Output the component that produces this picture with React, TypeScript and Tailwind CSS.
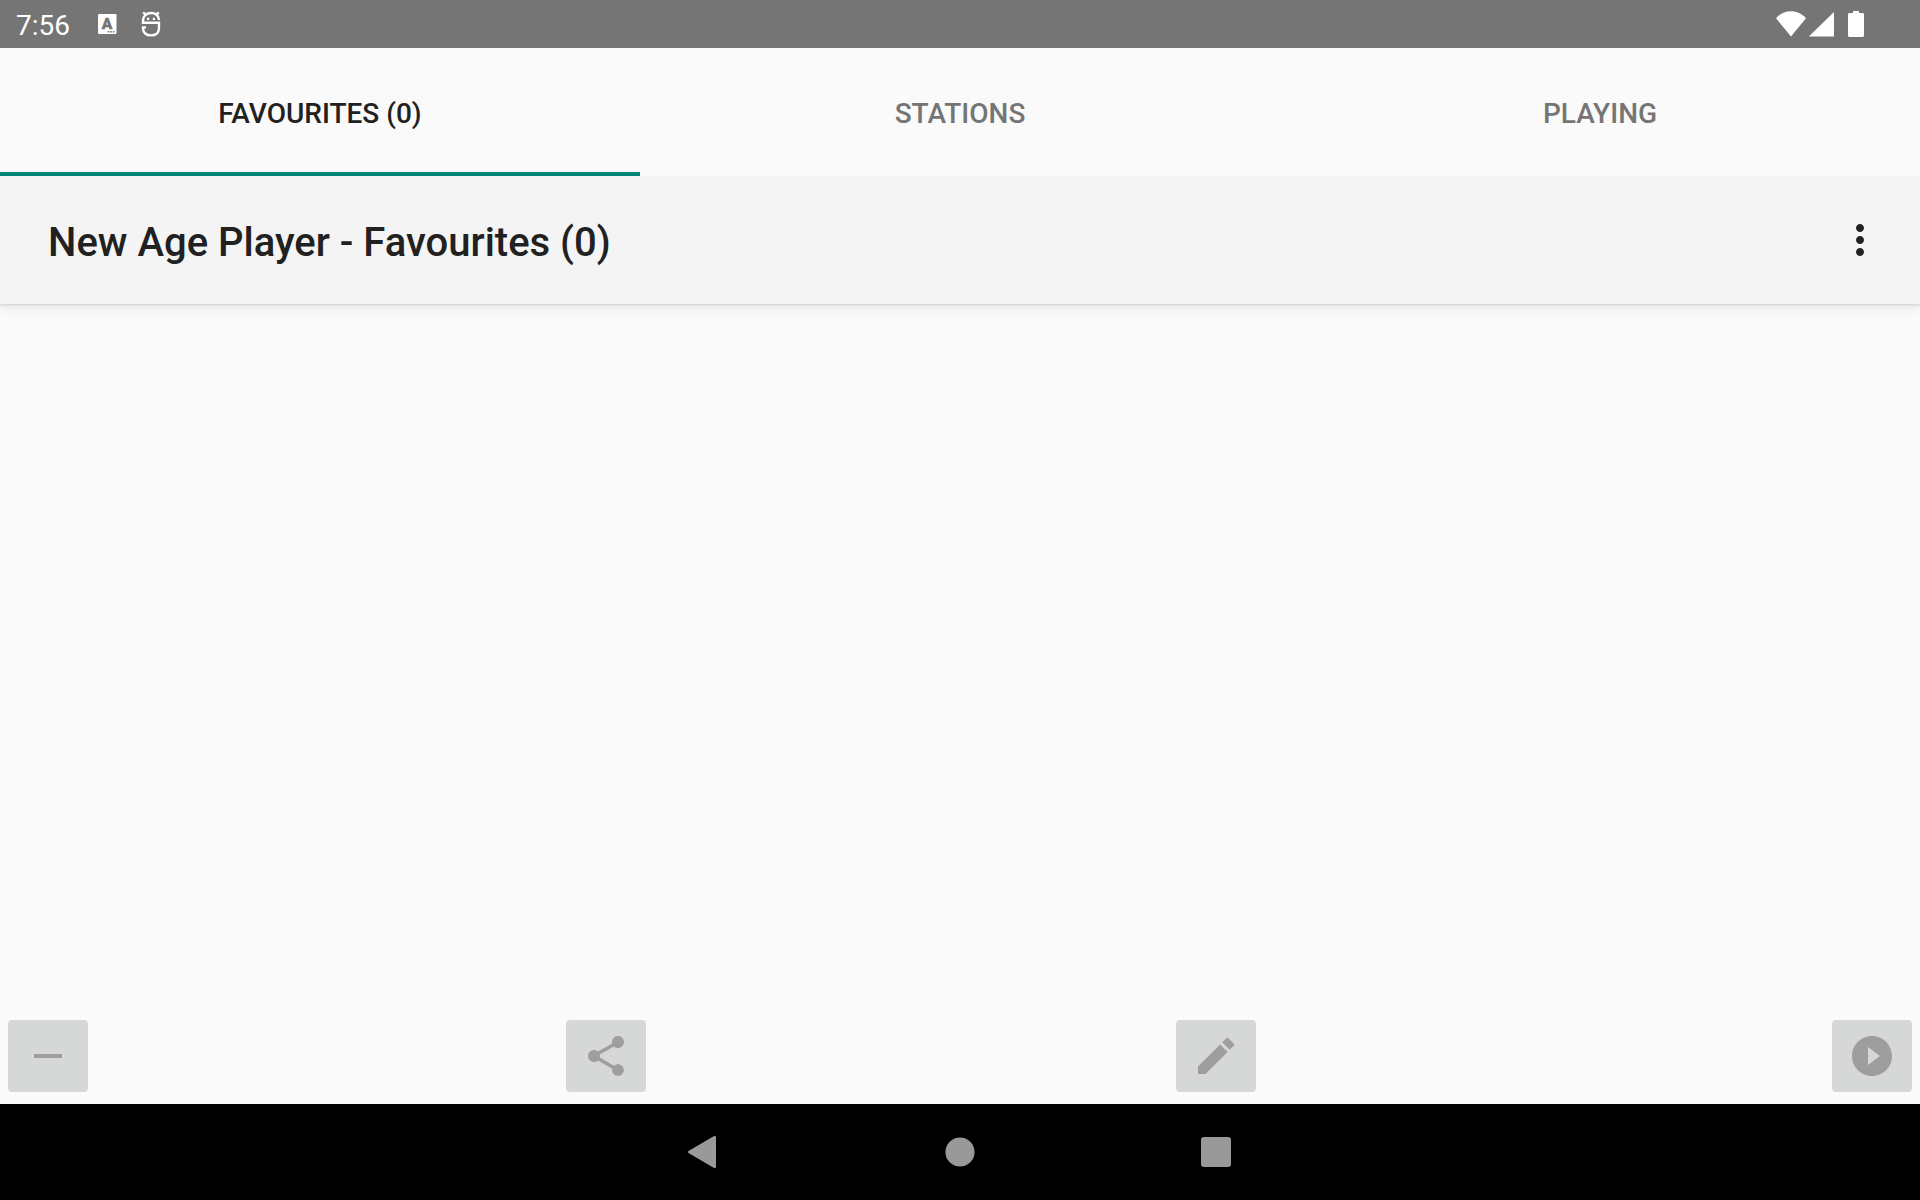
import React, { useState } from 'react'

interface TabItem {
  id: string
  label: string
}

const TABS: TabItem[] = [
  { id: 'favourites', label: 'FAVOURITES (0)' },
  { id: 'stations', label: 'STATIONS' },
  { id: 'playing', label: 'PLAYING' },
]

const StatusBar: React.FC = () => (
  <div className="flex h-12 items-center justify-between bg-[#757575] pl-4 pr-14 text-white">
    <div className="flex items-center">
      <span className="pt-1 text-[28px] leading-8">7:56</span>

      {/* Keyboard notification */}
      <svg className="ml-[26px] h-6 w-6" viewBox="0 0 24 24" aria-hidden="true">
        <rect x="2" y="2" width="18.5" height="20" rx="1.2" fill="#fff" />
        <text
          x="11"
          y="16.800"
          textAnchor="middle"
          fontFamily="Roboto, sans-serif"
          fontWeight="900"
          fontSize="15.500"
          fill="#757575"
          stroke="#757575"
          strokeWidth="0.4"
        >
          A
        </text>
        <path d="M11.6 19h1.6v1.5h-1.6zM14.2 19h1.6v1.5h-1.6zM16.8 19h1.6v1.5h-1.6z" fill="#757575" />
      </svg>

      {/* Debug notification */}
      <svg className="ml-5 h-7 w-6" viewBox="0 0 24 28" fill="none" stroke="#fff" strokeWidth="2.4" aria-hidden="true">
        <path d="M19 10C18.600 5.500 15.500 3 11 3S3 6 3 10.500V12.800H19V18c0 4.800-3.200 7.400-8 7.400S3 22.800 3 18V17.400H6" />
        <path d="M3.200 2.400l3 2.800M18.800 2.400l-3 2.800" />
        <path d="M7 7.800h2.200v2.200H7zM12.800 7.800H15v2.200h-2.200z" fill="#fff" stroke="none" />
      </svg>
    </div>

    <svg className="h-7 w-[88px]" viewBox="0 0 88 28" fill="#fff" aria-hidden="true">
      <path d="M0 8.200C4.200 3.400 9.200 1.200 15 1.200s10.800 2.200 15 7L15 26.500z" />
      <path d="M58 2v24.600H32.800z" />
      <path d="M77 1h6v2h3.600c.8 0 1.400.6 1.400 1.400v21.200c0 .8-.6 1.400-1.400 1.400H73.400c-.8 0-1.400-.6-1.400-1.400V4.400c0-.8.6-1.400 1.400-1.400H77z" />
    </svg>
  </div>
)

interface TabBarProps {
  active: string
  onSelect: (id: string) => void
}

const TabBar: React.FC<TabBarProps> = ({ active, onSelect }) => (
  <div className="relative z-10 grid h-32 grid-cols-3 bg-[#fafafa]" role="tablist">
    {TABS.map((tab) => (
      <button
        key={tab.id}
        type="button"
        role="tab"
        aria-selected={tab.id === active}
        onClick={() => onSelect(tab.id)}
        className={`border-b-4 pt-2 text-[28px] leading-8 font-medium ${
          tab.id === active
            ? 'border-b-[#008577] text-[#212121]'
            : 'border-b-transparent text-[#757575]'
        }`}
      >
        {tab.label}
      </button>
    ))}
  </div>
)

const AppBar: React.FC = () => (
  <header className="flex h-32 items-center justify-between bg-[#f4f4f4] pl-12 pr-9 shadow-[0_1px_2px_rgba(0,0,0,0.12),0_2px_10px_2px_rgba(0,0,0,0.08)]">
    <h1 className="pt-1.5 text-[40px] leading-12 font-medium text-[#212121]">
      New Age Player - Favourites (0)
    </h1>
    <button type="button" aria-label="More options">
      <svg className="h-12 w-12" viewBox="0 0 24 24" fill="#212121" aria-hidden="true">
        <path d="M12 8c1.100 0 2-.9 2-2s-.9-2-2-2-2 .9-2 2 .9 2 2 2zm0 2c-1.100 0-2 .9-2 2s.9 2 2 2 2-.9 2-2-.9-2-2-2zm0 6c-1.100 0-2 .9-2 2s.9 2 2 2 2-.9 2-2-.9-2-2-2z" />
      </svg>
    </button>
  </header>
)

interface ActionButtonProps {
  label: string
  path: string
}

const ActionButton: React.FC<ActionButtonProps> = ({ label, path }) => (
  <button
    type="button"
    disabled
    aria-label={label}
    className="flex h-18 w-20 items-center justify-center rounded-sm bg-[#d6d8d7]"
  >
    <svg className="h-12 w-12" viewBox="0 0 24 24" fill="#9e9e9e" aria-hidden="true">
      <path d={path} />
    </svg>
  </button>
)

const ACTIONS: ActionButtonProps[] = [
  { label: 'Remove', path: 'M19 13H5v-2h14v2z' },
  {
    label: 'Share',
    path: 'M18 16.080c-.76 0-1.440.3-1.960.77L8.910 12.700c.05-.23.09-.46.09-.7s-.04-.47-.09-.7l7.050-4.110c.54.5 1.250.81 2.040.81 1.660 0 3-1.340 3-3s-1.340-3-3-3-3 1.340-3 3c0 .24.04.47.09.7L8.040 9.810C7.500 9.310 6.790 9 6 9c-1.660 0-3 1.340-3 3s1.340 3 3 3c.79 0 1.500-.31 2.040-.81l7.120 4.160c-.05.21-.08.43-.08.65 0 1.610 1.310 2.920 2.920 2.920 1.610 0 2.920-1.310 2.920-2.920s-1.310-2.920-2.920-2.920z',
  },
  {
    label: 'Edit',
    path: 'M3 17.250V21h3.750L17.810 9.940l-3.750-3.750L3 17.250zM20.710 7.040l.7-.7-3.750-3.750-2.530 2.530 3.750 3.750 1.830-1.830z',
  },
  {
    label: 'Play',
    path: 'M12 2C6.480 2 2 6.480 2 12s4.480 10 10 10 10-4.480 10-10S17.520 2 12 2zm-2 14.500v-9l6 4.500-6 4.500z',
  },
]

const NavigationBar: React.FC = () => (
  <nav className="flex h-24 items-center justify-center gap-52 bg-black">
    <button type="button" aria-label="Back">
      <svg className="h-12 w-12" viewBox="0 0 48 48" fill="#999" aria-hidden="true">
        <path d="M36 9.500v29c0 1.300-1.200 2-2.300 1.300L8.900 25.300c-1.200-.7-1.200-1.900 0-2.600L33.700 8.200C34.800 7.500 36 8.200 36 9.500z" />
      </svg>
    </button>
    <button type="button" aria-label="Home">
      <svg className="h-12 w-12" viewBox="0 0 48 48" fill="#999" aria-hidden="true">
        <circle cx="24" cy="24" r="14.600" />
      </svg>
    </button>
    <button type="button" aria-label="Recent apps">
      <svg className="h-12 w-12" viewBox="0 0 48 48" fill="#999" aria-hidden="true">
        <rect x="9" y="9" width="30" height="30" rx="3" />
      </svg>
    </button>
  </nav>
)

const App: React.FC = () => {
  const [activeTab, setActiveTab] = useState('favourites')

  return (
    <div className="flex min-h-screen flex-col bg-[#fafafa] font-[Roboto,sans-serif]">
      <StatusBar />
      <TabBar active={activeTab} onSelect={setActiveTab} />
      <AppBar />

      {/* Favourites list, empty until a station is added */}
      <main className="flex-1" />

      <div className="grid grid-cols-[558fr_610fr_656fr_80px] px-2 pb-3">
        {ACTIONS.map((action) => (
          <ActionButton key={action.label} {...action} />
        ))}
      </div>
      <NavigationBar />
    </div>
  )
}

export default App
